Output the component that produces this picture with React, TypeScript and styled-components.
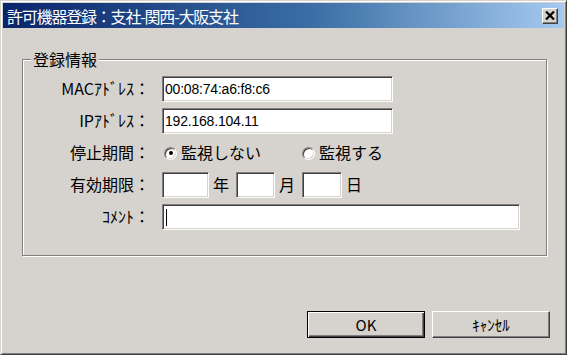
import styled, { createGlobalStyle } from "styled-components";

const uiFont = `"Noto Sans CJK JP", "Noto Sans", sans-serif`;

const GlobalStyle = createGlobalStyle`
    html, body {
        margin: 0;
        padding: 0;
        background: #ffffff;
    }
    * {
        box-sizing: border-box;
    }
`;

const StyledWindow = styled.div`
    width: 567px;
    height: 355px;
    display: flex;
    flex-direction: column;
    padding: 2px;
    background: #d6d3ce;
    border: 1px solid;
    border-color: #d6d3ce #404040 #404040 #d6d3ce;
    box-shadow: inset 1px 1px 0 #ffffff, inset -1px -1px 0 #808080;
    font-family: ${uiFont};
    color: #000000;
`;

const StyledTitleBar = styled.div`
    height: 25px;
    display: flex;
    align-items: center;
    justify-content: space-between;
    padding: 0 6px 0 4px;
    background: linear-gradient(to right, #0a246a 0%, #3a6ea5 55%, #a6caf0 100%);
`;

const StyledTitle = styled.span`
    color: #ffffff;
    font-size: 16px;
    line-height: 1;
    letter-spacing: -1.2px;
`;

const StyledCloseBtn = styled.button`
    width: 16px;
    height: 16px;
    padding: 0;
    display: flex;
    align-items: center;
    justify-content: center;
    background: #d6d3ce;
    border: 1px solid;
    border-color: #ffffff #404040 #404040 #ffffff;
    box-shadow: inset -1px -1px 0 #808080;
    svg {
        display: block;
    }
`;

const StyledBody = styled.div`
    flex: 1;
    display: flex;
    flex-direction: column;
    padding: 31px 14px 14px 19px;
`;

const StyledGroup = styled.div`
    position: relative;
    margin-right: 3px;
    padding: 16px 0 25px 0;
    border: 1px solid #808080;
    box-shadow: inset 1px 1px 0 #ffffff, 1px 1px 0 #ffffff;
`;

const StyledLegend = styled.span`
    position: absolute;
    top: -11px;
    left: 8px;
    padding: 0 2px;
    background: #d6d3ce;
    font-size: 16px;
    line-height: 20px;
`;

const StyledForm = styled.div`
    display: grid;
    grid-template-columns: 127px 1fr;
    grid-auto-rows: 26px;
    column-gap: 12px;
    row-gap: 6px;
    align-items: center;
`;

const StyledLabel = styled.span`
    text-align: right;
    font-size: 16px;
    line-height: 1.2;
    white-space: nowrap;
`;

const StyledRow = styled.div`
    display: flex;
    align-items: center;
    height: 100%;
`;

const StyledTextBox = styled.div<{ $width: number }>`
    width: ${(p) => p.$width}px;
    height: 26px;
    display: flex;
    align-items: center;
    padding-left: 2px;
    background: #ffffff;
    border: 1px solid;
    border-color: #808080 #ffffff #ffffff #808080;
    box-shadow: inset 1px 1px 0 #404040, inset -1px -1px 0 #d6d3ce;
    font-family: "Liberation Sans", Arial, sans-serif;
    font-size: 14px;
    letter-spacing: -0.2px;
    white-space: nowrap;
    overflow: hidden;
`;

const StyledCaret = styled.span`
    display: block;
    width: 1px;
    height: 17px;
    margin-left: 1px;
    background: #000000;
`;

const StyledUnit = styled.span`
    width: 27px;
    padding-left: 4px;
    font-size: 16px;
    line-height: 1.2;
`;

const StyledRadioOption = styled.label`
    width: 138px;
    display: flex;
    align-items: center;
    gap: 4px;
    padding-left: 2px;
    font-size: 16px;
    line-height: 1.2;
`;

const StyledRadio = styled.span<{ $checked?: boolean }>`
    position: relative;
    width: 13px;
    height: 13px;
    flex: none;
    border-radius: 50%;
    background: #ffffff;
    border: 1px solid;
    border-color: #808080 #ffffff #ffffff #808080;
    box-shadow: inset 1px 1px 0 #404040, inset -1px -1px 0 #d6d3ce;
    &::after {
        content: "";
        display: ${(p) => (p.$checked ? "block" : "none")};
        position: absolute;
        left: 3.5px;
        top: 3.5px;
        width: 4px;
        height: 4px;
        border-radius: 50%;
        background: #000000;
    }
`;

const StyledSpacer = styled.div`
    flex: 1;
`;

const StyledButtons = styled.div`
    display: flex;
    justify-content: flex-end;
    gap: 7px;
`;

const StyledBtn = styled.button<{ $isDefault?: boolean }>`
    width: 118px;
    height: 27px;
    padding: 0;
    font-family: ${uiFont};
    font-size: 15px;
    color: #000000;
    background: #d6d3ce;
    border: 1px solid;
    border-color: ${(p) =>
        p.$isDefault ? "#000000" : "#ffffff #404040 #404040 #ffffff"};
    box-shadow: ${(p) =>
        p.$isDefault
            ? "inset 1px 1px 0 #ffffff, inset -1px -1px 0 #404040, inset -2px -2px 0 #808080"
            : "inset -1px -1px 0 #808080"};
`;

const CloseIcon = () => (
    <svg width="10" height="9" viewBox="0 0 10 9">
        <path d="M1 0.5 L9 8.5 M9 0.5 L1 8.5" stroke="#000" strokeWidth="2.2" />
    </svg>
);

const App = () => {
    return (
        <>
            <GlobalStyle />
            <StyledWindow>
                <StyledTitleBar>
                    <StyledTitle>許可機器登録：支社-関西-大阪支社</StyledTitle>
                    <StyledCloseBtn aria-label="閉じる">
                        <CloseIcon />
                    </StyledCloseBtn>
                </StyledTitleBar>
                <StyledBody>
                    <StyledGroup>
                        <StyledLegend>登録情報</StyledLegend>
                        <StyledForm>
                            <StyledLabel>MACｱﾄﾞﾚｽ：</StyledLabel>
                            <StyledRow>
                                <StyledTextBox $width={231}>00:08:74:a6:f8:c6</StyledTextBox>
                            </StyledRow>

                            <StyledLabel>IPｱﾄﾞﾚｽ：</StyledLabel>
                            <StyledRow>
                                <StyledTextBox $width={231}>192.168.104.11</StyledTextBox>
                            </StyledRow>

                            <StyledLabel>停止期間：</StyledLabel>
                            <StyledRow>
                                <StyledRadioOption>
                                    <StyledRadio $checked />
                                    監視しない
                                </StyledRadioOption>
                                <StyledRadioOption>
                                    <StyledRadio />
                                    監視する
                                </StyledRadioOption>
                            </StyledRow>

                            <StyledLabel>有効期限：</StyledLabel>
                            <StyledRow>
                                <StyledTextBox $width={47} />
                                <StyledUnit>年</StyledUnit>
                                <StyledTextBox $width={39} />
                                <StyledUnit>月</StyledUnit>
                                <StyledTextBox $width={40} />
                                <StyledUnit>日</StyledUnit>
                            </StyledRow>

                            <StyledLabel>ｺﾒﾝﾄ：</StyledLabel>
                            <StyledRow>
                                <StyledTextBox $width={358}>
                                    <StyledCaret />
                                </StyledTextBox>
                            </StyledRow>
                        </StyledForm>
                    </StyledGroup>
                    <StyledSpacer />
                    <StyledButtons>
                        <StyledBtn $isDefault>OK</StyledBtn>
                        <StyledBtn>ｷｬﾝｾﾙ</StyledBtn>
                    </StyledButtons>
                </StyledBody>
            </StyledWindow>
        </>
    );
};

export default App;
